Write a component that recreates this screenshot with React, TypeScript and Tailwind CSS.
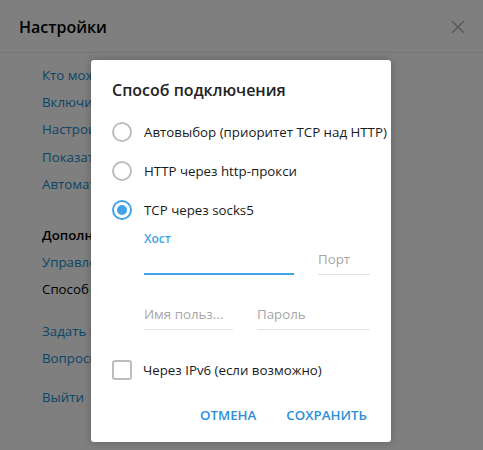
import { X } from 'lucide-react';

// фон: панель настроек под затемнением
const links: { text: string; kind: 'link' | 'head' | 'plain'; mt?: string }[] = [
    { text: 'Кто может приглашать меня в группы', kind: 'link' },
    { text: 'Включить локальный код-пароль', kind: 'link' },
    { text: 'Настроить облачный пароль', kind: 'link' },
    { text: 'Показать все сеансы', kind: 'link' },
    { text: 'Автоматическое удаление аккаунта', kind: 'link' },
    { text: 'Дополнительно', kind: 'head', mt: 'mt-[24px]' },
    { text: 'Управление локальным хранилищем', kind: 'link' },
    { text: 'Способ подключения: TCP через socks5', kind: 'plain' },
    { text: 'Задать вопрос', kind: 'link', mt: 'mt-[14px]' },
    { text: 'Вопросы о Telegram', kind: 'link' },
    { text: 'Выйти', kind: 'link', mt: 'mt-[12px]' },
];

function Radio({ checked, label }: { checked?: boolean; label: string }) {
    return (
        <div className="flex h-[39px] items-center">
            <span
                className={
                    checked
                        ? 'flex h-[20px] w-[20px] shrink-0 items-center justify-center rounded-full border-2 border-[#40a4e6]'
                        : 'flex h-[20px] w-[20px] shrink-0 items-center justify-center rounded-full border-2 border-[#bdbdbd]'
                }
            >
                {checked && <span className="h-[10px] w-[10px] rounded-full bg-[#40a4e6]" />}
            </span>
            <span className="ml-[12px] whitespace-nowrap text-[13.3px] leading-[20px] text-[#1a1a1a]">{label}</span>
        </div>
    );
}

function Field({ w, placeholder, label, active }: { w: string; placeholder?: string; label?: string; active?: boolean }) {
    return (
        <div className={`${w} flex flex-col`}>
            {label && <span className="text-[12px] font-semibold leading-[16px] text-[#40a4e6]">{label}</span>}
            <div className="flex h-[26px] items-center text-[13.3px] text-[#a6a6a6]">{placeholder}</div>
            <div className={active ? 'h-[2px] bg-[#40a4e6]' : 'mt-[1px] h-[1px] bg-[#e3e3e3]'} />
        </div>
    );
}

export default function App() {
    return (
        <div className="relative h-[450px] w-[483px] overflow-hidden bg-white font-['Open_Sans',sans-serif]">
            <div className="flex h-[53px] items-center justify-between border-b border-[#eeeeee] pl-[19px] pr-[14px] pt-[2px]">
                <span className="text-[16px] font-semibold text-black">Настройки</span>
                <X className="h-[22px] w-[22px] text-[#b0b0b0]" strokeWidth={1.6} />
            </div>

            {/* колонка ссылок; правая часть всё равно закрыта диалогом */}
            <div className="flex w-[91px] flex-col overflow-hidden pl-[42px] pt-[12px]">
                {links.map((l) => (
                    <div
                        key={l.text}
                        className={`${l.mt ?? ''} h-[27.2px] whitespace-nowrap text-[13.3px] leading-[20px] ${
                            l.kind === 'link' ? 'text-[#168acd]' : l.kind === 'head' ? 'font-semibold text-black' : 'text-black'
                        }`}
                    >
                        {l.text}
                    </div>
                ))}
            </div>

            {/* затемнение */}
            <div className="absolute inset-0 bg-black/50" />

            {/* диалог */}
            <div className="absolute left-[91px] top-[60px] flex h-[382px] w-[300px] flex-col rounded-[3px] bg-white pl-[21px] pr-[21px] shadow-[0_0_8px_rgba(0,0,0,0.25)]">
                <div className="mt-[19px] text-[16px] font-semibold leading-[22px] text-[#222]">Способ подключения</div>

                <div className="mt-[11px] flex flex-col">
                    <Radio label="Автовыбор (приоритет TCP над HTTP)" />
                    <Radio label="HTTP через http-прокси" />
                    <Radio checked label="TCP через socks5" />
                </div>

                <div className="ml-[32px] mt-[2px] flex items-end gap-[24px]">
                    <Field w="w-[150px]" label="Хост" active />
                    <Field w="w-[52px]" placeholder="Порт" />
                </div>

                <div className="ml-[32px] mt-[27px] flex items-end gap-[24px]">
                    <Field w="w-[89px]" placeholder="Имя польз..." />
                    <Field w="w-[113px]" placeholder="Пароль" />
                </div>

                <div className="mt-[30px] flex items-center">
                    <span className="h-[20px] w-[20px] shrink-0 rounded-[3px] border-2 border-[#bdbdbd]" />
                    <span className="ml-[11px] text-[13.3px] leading-[20px] text-[#1a1a1a]">Через IPv6 (если возможно)</span>
                </div>

                <div className="mt-[26px] flex justify-end gap-[30px] pr-[3px] text-[13.3px] font-semibold text-[#2e8fd6]">
                    <span>ОТМЕНА</span>
                    <span>СОХРАНИТЬ</span>
                </div>
            </div>
        </div>
    );
}
